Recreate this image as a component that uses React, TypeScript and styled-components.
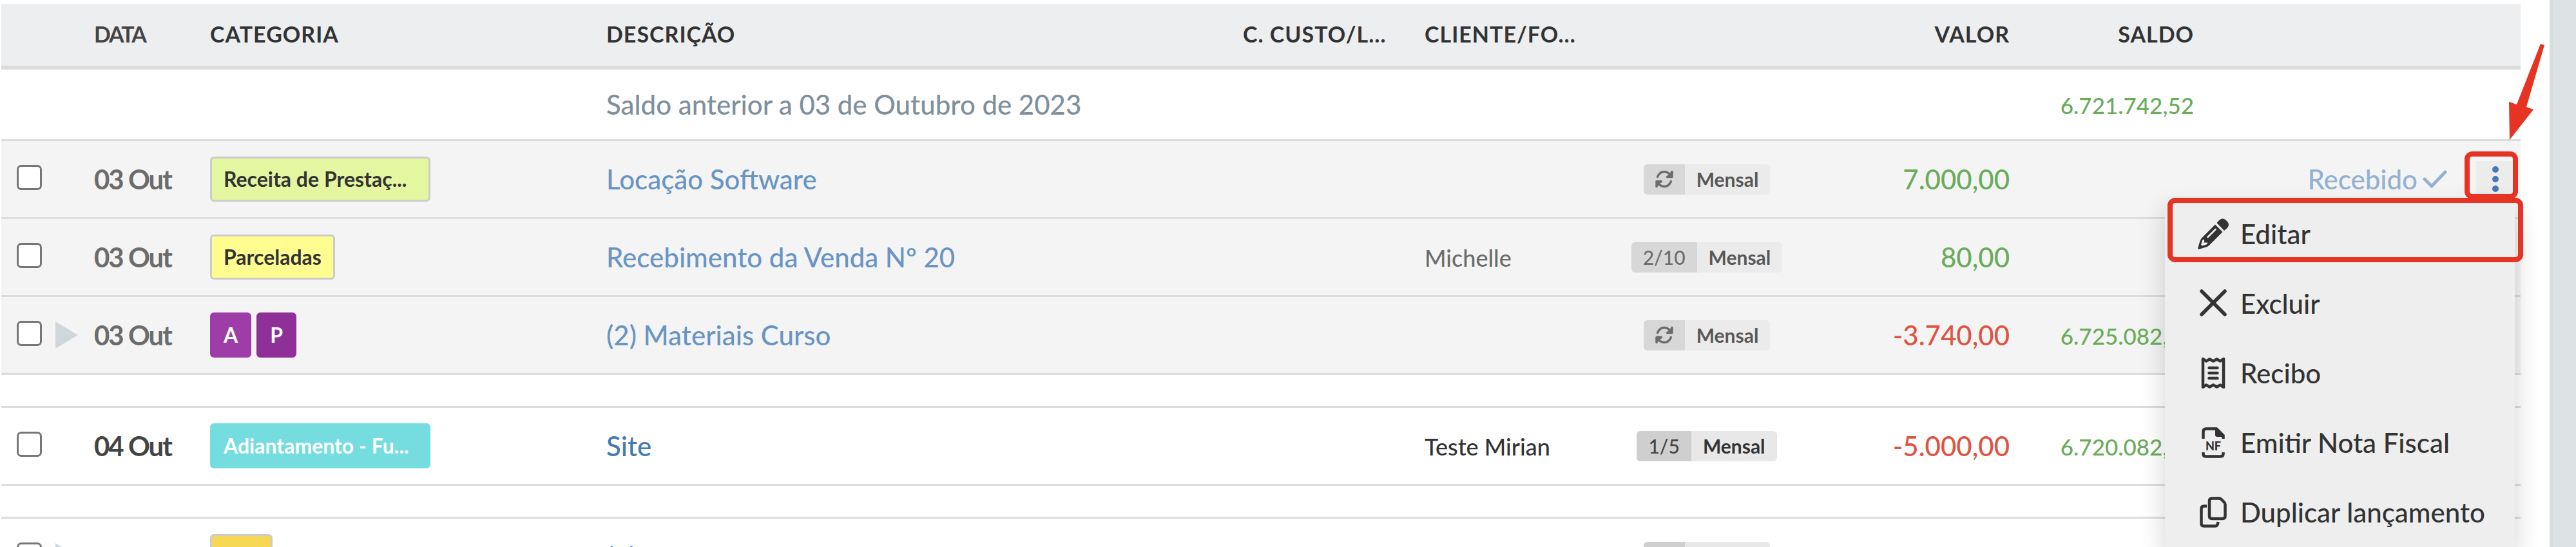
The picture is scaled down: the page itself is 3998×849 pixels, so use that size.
import React from "react";
import styled, { createGlobalStyle, css } from "styled-components";

const GlobalStyle = createGlobalStyle`
  *, *::before, *::after { box-sizing: border-box; }
  body {
    margin: 0;
    background: #fff;
    color: #333;
    font-family: Lato, "Open Sans", sans-serif;
    font-size: 42px;
    font-weight: 500;
    line-height: 50px;
  }
`;

const Page = styled.div`
  display: flex;
  height: 100vh;
  overflow: hidden;
`;

const Main = styled.main`
  flex: 1;
  min-width: 0;
  padding: 6px 45px 0 2px;
`;

const SideRail = styled.aside`
  width: 41px;
  background: #dde2e5;
  border-left: 5px solid #d8dede;
`;

const Ledger = styled.table`
  width: 100%;
  table-layout: fixed;
  border-collapse: separate;
  border-spacing: 0;
`;

const Col = styled.col<{ $w?: number }>`
  ${(p) => p.$w && css`width: ${p.$w}px;`}
`;

const HeadCell = styled.th<{ $right?: boolean; $tight?: boolean }>`
  height: 102px;
  padding: 0 0 2px;
  background: #edeef0;
  border-bottom: 6px solid #dcdcdc;
  color: ${(p) => (p.$tight ? "#444" : "#333")};
  font-size: 34px;
  line-height: 40px;
  font-weight: 700;
  letter-spacing: ${(p) => (p.$tight ? "-2px" : "1px")};
  text-align: ${(p) => (p.$right ? "right" : "left")};
  text-transform: uppercase;
  white-space: nowrap;
`;

const Row = styled.tr<{ $done?: boolean }>`
  background: ${(p) => (p.$done ? "#f4f4f4" : "#fff")};
  color: ${(p) => (p.$done ? "#6c6c6c" : "#333")};
`;

const Cell = styled.td<{ $align?: "right" | "center"; $short?: boolean }>`
  height: ${(p) => (p.$short ? 111 : 121)}px;
  padding: 0;
  border-bottom: 3px solid #dcdcdc;
  text-align: ${(p) => p.$align ?? "left"};
  white-space: nowrap;
`;

const GapCell = styled.td`
  height: 51px;
  padding: 0;
  border-bottom: 3px solid #dcdcdc;
`;

const Select = styled.div`
  display: flex;
  align-items: center;
  gap: 21px;
  padding-left: 24px;
`;

const Checkbox = styled.input`
  appearance: none;
  width: 39px;
  height: 39px;
  margin: 0 0 6px;
  border: 3px solid #767676;
  border-radius: 7px;
  background: #fff;
`;

const Expander = styled.button`
  width: 35px;
  height: 42px;
  padding: 0;
  border: 0;
  background: #d0d7db;
  clip-path: polygon(0 0, 100% 50%, 0 100%);
`;

const DateText = styled.span<{ $done?: boolean }>`
  color: ${(p) => (p.$done ? "#6c6c6c" : "#444")};
  font-weight: 700;
  letter-spacing: -2px;
`;

const Tags = styled.div`
  display: flex;
  gap: 8px;
`;

const Tag = styled.span<{ $bg: string; $light?: boolean; $min?: number }>`
  min-width: ${(p) => p.$min ?? 62}px;
  height: 70px;
  padding: 0 18px;
  border: 3px solid ${(p) => (p.$light ? p.$bg : "#ccc")};
  border-radius: 6px;
  background: ${(p) => p.$bg};
  color: ${(p) => (p.$light ? "#fff" : "#333")};
  font-size: 32px;
  line-height: 64px;
  font-weight: 700;
`;

const Description = styled.a<{ $done?: boolean }>`
  color: ${(p) => (p.$done ? "#6a94c4" : "#457ab5")};
  text-decoration: none;
`;

const Muted = styled.span`
  color: #7f909c;
`;

const Client = styled.span`
  font-size: 36px;
`;

const Amount = styled.span<{ $negative?: boolean }>`
  color: ${(p) => (p.$negative ? "#de5442" : "#6aac5b")};
`;

const Balance = styled.span`
  color: #6aac5b;
  font-size: 35px;
`;

const Centered = styled.div`
  display: flex;
  justify-content: center;
`;

const Recurrence = styled.span<{ $done?: boolean }>`
  display: flex;
  height: 47px;
  border-radius: 6px;
  overflow: hidden;
  background: ${(p) => (p.$done ? "#ebebeb" : "#e8e8e8")};
  color: ${(p) => (p.$done ? "#585858" : "#333")};
  font-size: 30px;
  line-height: 47px;
`;

const Count = styled.span<{ $done?: boolean }>`
  display: flex;
  align-items: center;
  padding: 0 18px;
  background: ${(p) => (p.$done ? "#d7d7d7" : "#cfcfcf")};
  color: ${(p) => (p.$done ? "#6c6c6c" : "#444")};
`;

const Period = styled.strong`
  padding: 0 18px;
`;

const Status = styled.div`
  display: flex;
  align-items: center;
  justify-content: flex-end;
  padding-right: 9px;
  color: #94b1d4;
`;

const StatusLabel = styled.span`
  display: flex;
  align-items: center;
  gap: 8px;
  margin-right: 45px;
`;

const Actions = styled.div`
  position: relative;
  width: 60px;
  height: 56px;
`;

const KebabButton = styled.button`
  display: flex;
  align-items: center;
  justify-content: center;
  width: 100%;
  height: 100%;
  padding: 0;
  border: 0;
  background: #ececec;
`;

const Menu = styled.ul`
  position: absolute;
  top: 58px;
  right: 0;
  z-index: 2;
  width: 543px;
  margin: 0;
  padding: 1px 0;
  background: #eee;
  box-shadow: 0 18px 36px rgba(0, 0, 0, 0.175);
  list-style: none;
`;

const MenuButton = styled.button`
  display: flex;
  align-items: center;
  gap: 18px;
  width: 100%;
  height: 108px;
  padding: 0 20px 0 51px;
  border: 0;
  background: transparent;
  color: #333;
  font: inherit;
  text-align: left;
  white-space: nowrap;

  svg { flex: none; }
`;

const KebabMark = styled.span`
  position: absolute;
  top: -15px;
  left: -18px;
  z-index: 3;
  width: 83px;
  height: 74px;
  border: 8px solid #e73323;
  border-radius: 12px;
  pointer-events: none;
`;

const ItemMark = styled.span`
  position: absolute;
  top: -1px;
  left: 4px;
  right: -13px;
  height: 100px;
  border: 8px solid #e73323;
  border-radius: 12px;
  pointer-events: none;
`;

const Arrow = styled.svg`
  position: absolute;
  top: -182px;
  left: 49px;
  z-index: 3;
  pointer-events: none;
`;

const SyncIcon = () => (
  <svg width="28" height="28" viewBox="0 0 28 28" fill="none" stroke="#6c6c6c" strokeWidth="3.400" strokeLinecap="round" strokeLinejoin="round">
    <path d="M3.500 10.500C6 4.500 10 2.500 14 2.500C18.500 2.500 22 5 25 9.500" />
    <path d="M26 2.500V10.500H18.500L23 8Z" fill="#6c6c6c" />
    <path d="M24.500 17.500C22 23.500 18 25.500 14 25.500C9.500 25.500 6 23 3 18.500" />
    <path d="M2 25.500V17.500H9.500L5 20Z" fill="#6c6c6c" />
  </svg>
);

const CheckIcon = () => (
  <svg width="38" height="28" viewBox="0 0 38 28" fill="none" stroke="currentColor" strokeWidth="5" strokeLinecap="round" strokeLinejoin="round">
    <path d="M3 14L14 25L35 3" />
  </svg>
);

const KebabIcon = () => (
  <svg width="10" height="40" viewBox="0 0 10 40" fill="#457ab5">
    <circle cx="5" cy="5" r="5" />
    <circle cx="5" cy="20" r="5" />
    <circle cx="5" cy="35" r="5" />
  </svg>
);

const PencilIcon = () => (
  <svg width="48" height="48" viewBox="0 0 48 48">
    <path fill="#333" d="M33 3C36 -.5 41 -.5 44 3L45.500 4.500C49 8 48.500 12 45.500 15L41 19L29.500 7Z" />
    <path fill="#333" d="M27 9.500L38.500 21L18 41.500Q16 43.500 13 44.500L3 47.500Q-.5 48.500 .5 45L3.500 35Q4.500 32 6.500 30Z" />
    <path fill="#eee" d="M7 34Q8 32.500 10 32.500V37.500H15Q15.500 39.500 13.500 40.500L7 42.500L5 41Z" />
    <path fill="none" stroke="#eee" strokeWidth="2.500" strokeLinecap="round" d="M27.500 17L15.500 29" />
  </svg>
);

const CloseIcon = () => (
  <svg width="48" height="48" viewBox="0 0 48 48" fill="none" stroke="#333" strokeWidth="5.500" strokeLinecap="round">
    <path d="M6 5L42 41M42 5L6 41" />
  </svg>
);

const ReceiptIcon = () => (
  <svg width="48" height="48" viewBox="0 0 48 48" fill="none" stroke="#333" strokeWidth="4.500" strokeLinecap="round" strokeLinejoin="round">
    <path d="M8 2L13 5.500L18.500 2.500L24 5.500L29.500 2.500L35 5.500L40 2V46L35 42.500L29.500 45.500L24 42.500L18.500 45.500L13 42.500L8 46Z" />
    <path d="M17.500 16H30.500M17.500 24H30.500M17.500 32H30.500" />
  </svg>
);

const InvoiceIcon = () => (
  <svg width="48" height="48" viewBox="0 0 48 48">
    <path fill="none" stroke="#333" strokeWidth="4.500" d="M8.500 18V7Q8.500 2.500 13 2.500H29L39.500 13V18M8.500 39V41.500Q8.500 45.500 12.500 45.500H35.500Q39.500 45.500 39.500 41.500V39" />
    <path fill="#333" d="M27 1H30L41 13V15H30Q27 15 27 12Z" />
    <text x="24" y="36" textAnchor="middle" fontFamily="Lato, sans-serif" fontSize="18" fontWeight="900" fill="#333">NF</text>
  </svg>
);

const CopyIcon = () => (
  <svg width="48" height="48" viewBox="0 0 48 48" fill="none" stroke="#333" strokeWidth="4.500" strokeLinejoin="round">
    <path d="M22 2.500H33Q35 2.500 36.500 4L41 8.500Q42.500 10 42.500 12V30Q42.500 34 38.500 34H22Q18 34 18 30V6.500Q18 2.500 22 2.500Z" />
    <path d="M14 14.500H10Q5.500 14.500 5.500 18.500V41.500Q5.500 45.500 9.500 45.500H27Q31 45.500 31.500 39" />
  </svg>
);

const menuItems = [
  { label: "Editar", Icon: PencilIcon },
  { label: "Excluir", Icon: CloseIcon },
  { label: "Recibo", Icon: ReceiptIcon },
  { label: "Emitir Nota Fiscal", Icon: InvoiceIcon },
  { label: "Duplicar lançamento", Icon: CopyIcon },
];

type TagData = { text?: string; bg: string; light?: boolean; min?: number };
type Entry = {
  date?: string;
  done?: boolean;
  group?: boolean;
  tags: TagData[];
  description: string;
  client?: string;
  count?: string;
  value?: string;
  balance?: string;
  open?: boolean;
};

const settled: Entry[] = [
  { date: "03 Out", done: true, tags: [{ text: "Receita de Prestaç...", bg: "#e4f6a0", min: 342 }], description: "Locação Software", value: "7.000,00", open: true },
  { date: "03 Out", done: true, tags: [{ text: "Parceladas", bg: "#fffd90" }], description: "Recebimento da Venda Nº 20", client: "Michelle", count: "2/10", value: "80,00" },
  { date: "03 Out", done: true, group: true, tags: [{ text: "A", bg: "#9e3da7", light: true }, { text: "P", bg: "#8e3098", light: true }], description: "(2) Materiais Curso", value: "-3.740,00", balance: "6.725.082,52" },
];

const pending: Entry = {
  date: "04 Out", tags: [{ text: "Adiantamento - Fu...", bg: "#75dde0", light: true, min: 342 }], description: "Site", client: "Teste Mirian", count: "1/5", value: "-5.000,00", balance: "6.720.082,52",
};

const upcoming: Entry = {
  group: true, tags: [{ bg: "#f6d854", min: 97 }], description: "(2)",
};

const ActionMenu = () => (
  <Actions>
    <KebabButton type="button" aria-label="Ações" aria-expanded="true">
      <KebabIcon />
    </KebabButton>
    <Menu>
      {menuItems.map(({ label, Icon }) => (
        <li key={label}>
          <MenuButton type="button"><Icon />{label}</MenuButton>
        </li>
      ))}
      <ItemMark />
    </Menu>
    <KebabMark />
    <Arrow width="60" height="152" viewBox="0 0 60 152" fill="#e73323">
      <path d="M51 0L57 2L29 98L40 102L3 149L2 90L14 94Z" />
    </Arrow>
  </Actions>
);

const EntryRow = ({ entry }: { entry: Entry }) => (
  <Row $done={entry.done}>
    <Cell>
      <Select>
        <Checkbox type="checkbox" aria-label={`Selecionar ${entry.description}`} />
        {entry.group && <Expander type="button" aria-label="Expandir" />}
      </Select>
    </Cell>
    <Cell><DateText $done={entry.done}>{entry.date}</DateText></Cell>
    <Cell>
      <Tags>
        {entry.tags.map((t) => (
          <Tag key={t.bg} $bg={t.bg} $light={t.light} $min={t.min}>{t.text}</Tag>
        ))}
      </Tags>
    </Cell>
    <Cell><Description href="#" $done={entry.done}>{entry.description}</Description></Cell>
    <Cell />
    <Cell><Client>{entry.client}</Client></Cell>
    <Cell>
      <Centered>
        <Recurrence $done={entry.done}>
          <Count $done={entry.done}>{entry.count ?? <SyncIcon />}</Count>
          <Period>Mensal</Period>
        </Recurrence>
      </Centered>
    </Cell>
    <Cell $align="right"><Amount $negative={entry.value?.startsWith("-")}>{entry.value}</Amount></Cell>
    <Cell $align="right"><Balance>{entry.balance}</Balance></Cell>
    <Cell>
      {entry.open && (
        <Status>
          <StatusLabel>Recebido<CheckIcon /></StatusLabel>
          <ActionMenu />
        </Status>
      )}
    </Cell>
  </Row>
);

const Gap = () => (
  <tr><GapCell colSpan={10} /></tr>
);

export default function App() {
  return (
    <Page>
      <GlobalStyle />
      <Main>
        <Ledger>
          <colgroup>
            <Col $w={144} />
            <Col $w={180} />
            <Col $w={615} />
            <Col />
            <Col $w={282} />
            <Col $w={294} />
            <Col $w={288} />
            <Col $w={326} />
            <Col $w={286} />
            <Col $w={507} />
          </colgroup>
          <thead>
            <tr>
              <HeadCell />
              <HeadCell $tight>Data</HeadCell>
              <HeadCell>Categoria</HeadCell>
              <HeadCell>Descrição</HeadCell>
              <HeadCell>C. Custo/L…</HeadCell>
              <HeadCell>Cliente/Fo…</HeadCell>
              <HeadCell />
              <HeadCell $right>Valor</HeadCell>
              <HeadCell $right>Saldo</HeadCell>
              <HeadCell />
            </tr>
          </thead>
          <tbody>
            <Row>
              <Cell $short colSpan={3} />
              <Cell $short><Muted>Saldo anterior a 03 de Outubro de 2023</Muted></Cell>
              <Cell $short colSpan={4} />
              <Cell $short $align="right"><Balance>6.721.742,52</Balance></Cell>
              <Cell $short />
            </Row>
            {settled.map((e) => <EntryRow key={e.description} entry={e} />)}
            <Gap />
            <EntryRow entry={pending} />
            <Gap />
            <EntryRow entry={upcoming} />
          </tbody>
        </Ledger>
      </Main>
      <SideRail />
    </Page>
  );
}
